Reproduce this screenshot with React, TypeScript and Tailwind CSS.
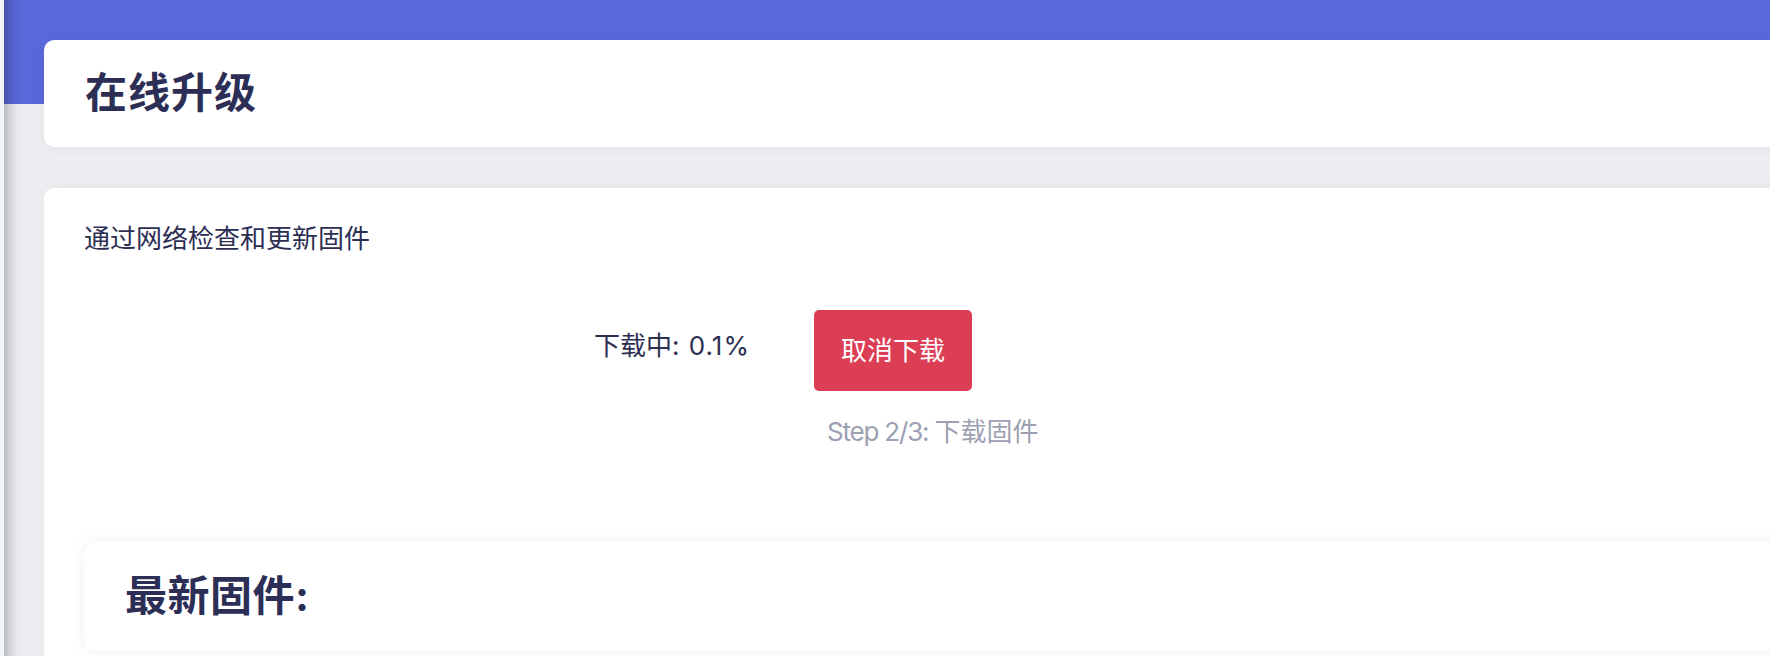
import React from "react";

const FONT = "font-['Inter','Noto_Sans_CJK_SC',sans-serif]";

export default function App() {
  return (
    <div className={`flex h-[656px] w-full overflow-hidden bg-[#f2f5f9] ${FONT}`}>
      <div className="w-[4px] shrink-0 bg-[#f2f5f9]" />
      <div className="flex-1 min-w-0 bg-[linear-gradient(to_bottom,#5969d9_104px,#eceef1_104px)] shadow-[inset_16px_0_14px_-12px_rgba(0,0,0,0.28)] pl-[40px] pt-[40px]">
        <div className="-mr-[40px] flex h-[107px] items-center rounded-[10px] bg-white pl-[41px] shadow-[0_4px_14px_rgba(30,35,60,0.04)]">
          <h1 className="text-[42px] font-bold leading-[1.2] tracking-[1px] text-[#2c2e56]">在线升级</h1>
        </div>
        <div className="-mr-[40px] mt-[41px] h-[520px] rounded-[10px] bg-white pl-[40px] pt-[31px] shadow-[0_-4px_14px_rgba(30,35,60,0.03)]">
          <p className="text-[26px] leading-[39px] text-[#2c2e52]">通过网络检查和更新固件</p>
          <div className="ml-[510px] mt-[52px] flex items-start">
            <div className="mt-[16px] w-[220px] text-[26px] leading-[39px] text-[#2c2e52]">
              下载中<span className="tracking-[1px]">: 0.1%</span>
            </div>
            <div className="flex flex-col items-start">
              <button className="flex h-[81px] w-[158px] items-center justify-center rounded-[5px] bg-[#dc3e56] text-[26px] leading-[39px] text-white">
                取消下载
              </button>
              <div className="ml-[13px] mt-[21px] whitespace-nowrap text-[26px] leading-[39px] text-[#9d9fb2]">
                <span className="tracking-[-1.2px]">Step 2/3: </span>下载固件
              </div>
            </div>
          </div>
          <div className="-mr-[40px] mt-[91px] flex h-[109px] items-center rounded-[12px] bg-white pl-[41px] shadow-[0_0_18px_rgba(30,35,60,0.06)]">
            <h2 className="text-[42px] font-bold leading-[1.2] tracking-[0.5px] text-[#2c2e56]">最新固件:</h2>
          </div>
        </div>
      </div>
    </div>
  );
}
